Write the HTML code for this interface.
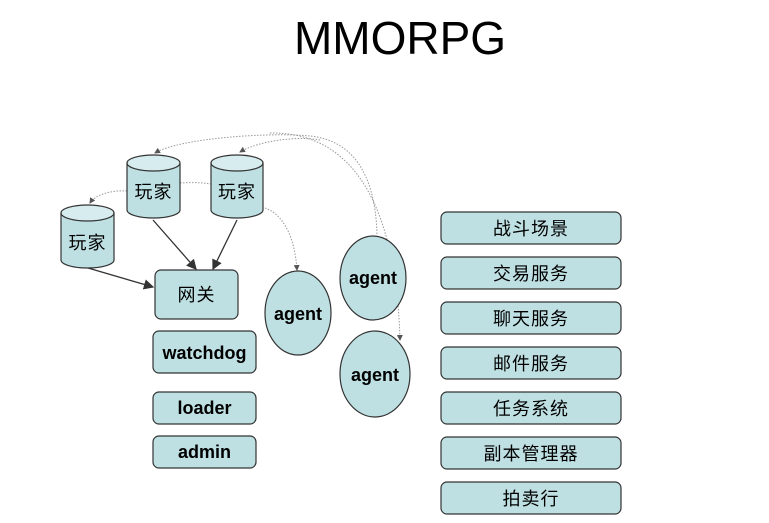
<!DOCTYPE html>
<html><head><meta charset="utf-8"><style>
html,body{margin:0;padding:0;background:#fff;width:769px;height:523px;overflow:hidden}
svg text{font-family:"Liberation Sans","Noto Sans CJK SC",sans-serif}
</style></head><body>
<svg width="769" height="523" xmlns="http://www.w3.org/2000/svg">
<defs><marker id="a" markerWidth="8" markerHeight="8" refX="7" refY="4" orient="auto"><path d="M0,0 L8,4 L0,8 z" fill="#333"/></marker>
<marker id="b" markerWidth="6" markerHeight="6" refX="5" refY="3" orient="auto"><path d="M0,0 L6,3 L0,6 z" fill="#555"/></marker></defs>
<text x="400" y="54" font-size="46" text-anchor="middle" fill="#000">MMORPG</text>
<g fill="none" stroke="#999" stroke-width="1" stroke-dasharray="1.5,1.5">
<path d="M377,234 C375,170 350,140 310,136 C270,132 180,138 155,153" marker-end="url(#b)"/>
<path d="M320,140 C300,136 260,140 240,152" marker-end="url(#b)"/>
<path d="M270,133 C330,132 395,170 400,340" marker-end="url(#b)"/>
<path d="M127,191 C110,190 95,195 90,203" marker-end="url(#b)"/>
<path d="M265,208 C285,215 295,240 297,270" marker-end="url(#b)"/>
<path d="M180,183 C195,182 205,183 211,184"/>
</g>
<g stroke="#333" stroke-width="1.3" marker-end="url(#a)">
<line x1="153" y1="220" x2="196" y2="269"/>
<line x1="237" y1="220" x2="213" y2="269"/>
<line x1="88" y1="268" x2="153" y2="287"/>
</g>
<g fill="#bfe0e3" stroke="#333" stroke-width="1.2">
<path d="M127,163 v47 a26.5,8 0 0 0 53,0 v-47"/><ellipse cx="153.5" cy="163" rx="26.5" ry="8" fill="#d6ecee"/>
<path d="M211,163 v47 a26,8 0 0 0 52,0 v-47"/><ellipse cx="237" cy="163" rx="26" ry="8" fill="#d6ecee"/>
<path d="M61,213 v47 a26.5,8 0 0 0 53,0 v-47"/><ellipse cx="87.5" cy="213" rx="26.5" ry="8" fill="#d6ecee"/>
<rect x="155" y="270" width="83" height="49" rx="6"/>
<rect x="153" y="331" width="103" height="42" rx="6"/>
<rect x="153" y="392" width="103" height="32" rx="6"/>
<rect x="153" y="436" width="103" height="32" rx="6"/>
<ellipse cx="298" cy="313" rx="33" ry="42"/>
<ellipse cx="373" cy="278" rx="33" ry="42"/>
<ellipse cx="375" cy="374" rx="35" ry="43"/>
<rect x="441" y="212" width="180" height="32" rx="6"/>
<rect x="441" y="257" width="180" height="32" rx="6"/>
<rect x="441" y="302" width="180" height="32" rx="6"/>
<rect x="441" y="347" width="180" height="32" rx="6"/>
<rect x="441" y="392" width="180" height="32" rx="6"/>
<rect x="441" y="437" width="180" height="32" rx="6"/>
<rect x="441" y="482" width="180" height="32" rx="6"/>
</g>
<g font-size="18" text-anchor="middle" fill="#000" letter-spacing="1">
<text x="153.5" y="198">玩家</text>
<text x="237" y="198">玩家</text>
<text x="87.5" y="249">玩家</text>
<text x="196.5" y="301">网关</text>
<text x="531" y="235">战斗场景</text>
<text x="531" y="280">交易服务</text>
<text x="531" y="325">聊天服务</text>
<text x="531" y="370">邮件服务</text>
<text x="531" y="415">任务系统</text>
<text x="531" y="460">副本管理器</text>
<text x="531" y="505">拍卖行</text>
</g>
<g font-size="18" font-weight="bold" text-anchor="middle" fill="#000">
<text x="204.5" y="359">watchdog</text>
<text x="204.5" y="414">loader</text>
<text x="204.5" y="458">admin</text>
<text x="298" y="320">agent</text>
<text x="373" y="284">agent</text>
<text x="375" y="381">agent</text>
</g>
</svg>
</body></html>
